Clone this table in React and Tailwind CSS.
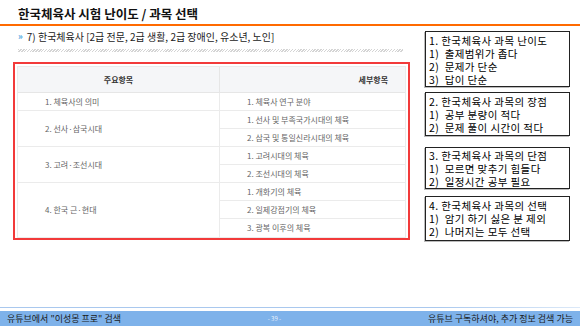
import React from "react";

const font = { fontFamily: '"Noto Sans CJK KR", "Noto Sans", sans-serif' };

function Box({ lines, className }) {
  return (
    <div
      className={
        "border border-[#222] bg-white px-[3px] text-[10.5px] leading-[13px] text-black shadow-[-1px_1px_0_#bbb] " +
        className
      }
    >
      {lines.map((l, i) => (
        <div key={i} className="h-[13px] whitespace-pre tracking-[0.4px]">
          {l}
        </div>
      ))}
    </div>
  );
}

export default function App() {
  const cell = "flex items-center border-b border-[#ebebeb] text-[8px] text-[#666]";
  return (
    <div className="relative flex h-[326px] w-[580px] flex-col overflow-hidden bg-white" style={font}>
      {/* title */}
      <div className="pl-[18px] pt-[5px] text-[12.5px] font-bold leading-[17px] text-[#111]">
        한국체육사 시험 난이도 / 과목 선택
      </div>
      <div className="mt-[2px] h-[2px] w-full bg-[#ff6a00]" />

      <div className="flex">
        {/* left column */}
        <div className="ml-[13px] w-[397px]">
          <div className="mt-[4px] flex items-center pl-[5px] text-[10px] leading-[14px] text-[#222]">
            <span className="mr-[4px] text-[9px] font-bold text-[#4aa3df]">»</span>
            <span>7) 한국체육사 [2급 전문, 2급 생활, 2급 장애인, 유소년, 노인]</span>
          </div>
          <div className="ml-[5px] mt-[5px] h-[3px] w-[385px] bg-[repeating-linear-gradient(135deg,#d4d4d4_0px,#d4d4d4_1px,transparent_1px,transparent_2px)]" />

          {/* table frame */}
          <div className="mt-[10px] h-[178px] border-2 border-[#f23a3a] p-[2px]">
            <div className="grid grid-cols-[202px_1fr] border border-[#ebebeb]">
              <div className="flex h-[26px] items-center justify-center border-b border-r border-[#e6e6e6] bg-[#f5f6f8] text-[8px] font-bold text-[#333]">
                주요항목
              </div>
              <div className="flex h-[26px] items-center justify-end border-b border-[#e6e6e6] bg-[#f5f6f8] pr-[17px] text-[8px] font-bold text-[#333]">
                세부항목
              </div>

              <div className={cell + " h-[18px] border-r pl-[27px]"}>1. 체육사의 의미</div>
              <div className={cell + " h-[18px] pl-[27px]"}>1. 체육사 연구 분야</div>

              <div className={cell + " row-span-2 border-r pl-[27px]"}>2. 선사·삼국시대</div>
              <div className={cell + " h-[18px] pl-[27px]"}>1. 선사 및 부족국가시대의 체육</div>
              <div className={cell + " h-[18px] pl-[27px]"}>2. 삼국 및 통일신라시대의 체육</div>

              <div className={cell + " row-span-2 border-r pl-[27px]"}>3. 고려·조선시대</div>
              <div className={cell + " h-[18px] pl-[27px]"}>1. 고려시대의 체육</div>
              <div className={cell + " h-[18px] pl-[27px]"}>2. 조선시대의 체육</div>

              <div className="row-span-3 flex items-center border-r border-[#ebebeb] pl-[27px] text-[8px] text-[#666]">
                4. 한국 근·현대
              </div>
              <div className={cell + " h-[18px] pl-[27px]"}>1. 개화기의 체육</div>
              <div className={cell + " h-[18px] pl-[27px]"}>2. 일제강점기의 체육</div>
              <div className="flex h-[18px] items-center pl-[27px] text-[8px] text-[#666]">3. 광복 이후의 체육</div>
            </div>
          </div>
        </div>

        {/* right column */}
        <div className="ml-[15px] flex w-[145px] flex-col">
          <Box
            className="mt-[5px] h-[56px] pt-[2px]"
            lines={["1. 한국체육사 과목 난이도", "1)  출제범위가 좁다", "2)  문제가 단순", "3)  답이 단순"]}
          />
          <Box
            className="mt-[5px] h-[44px] pt-[2px]"
            lines={["2. 한국체육사 과목의 장점", "1)  공부 분량이 적다", "2)  문제 풀이 시간이 적다"]}
          />
          <Box
            className="mt-[11px] h-[42px] pt-[1px]"
            lines={["3. 한국체육사 과목의 단점", "1)  모르면 맞추기 힘들다", "2)  일정시간 공부 필요"]}
          />
          <Box
            className="mt-[7px] h-[45px] pt-[2px]"
            lines={["4. 한국체육사 과목의 선택", "1)  암기 하기 싫은 분 제외", "2)  나머지는 모두 선택"]}
          />
        </div>
      </div>

      <div className="flex-1" />
      {/* footer */}
      <div className="h-[1px] w-full bg-[linear-gradient(90deg,#a9c8ee,#a9c8ee_75%,#dce9f8)]" />
      <div className="mt-[3px] flex h-[15px] items-center justify-between bg-[#7eb2ea] px-[7px] text-[9px] text-[#1a1a1a]">
        <span>유튜브에서 "이성몽 프로" 검색</span>
        <span className="text-[6px] text-[#e8f1fb]">- 39 -</span>
        <span>유튜브 구독하셔야, 추가 정보 검색 가능</span>
      </div>
    </div>
  );
}
